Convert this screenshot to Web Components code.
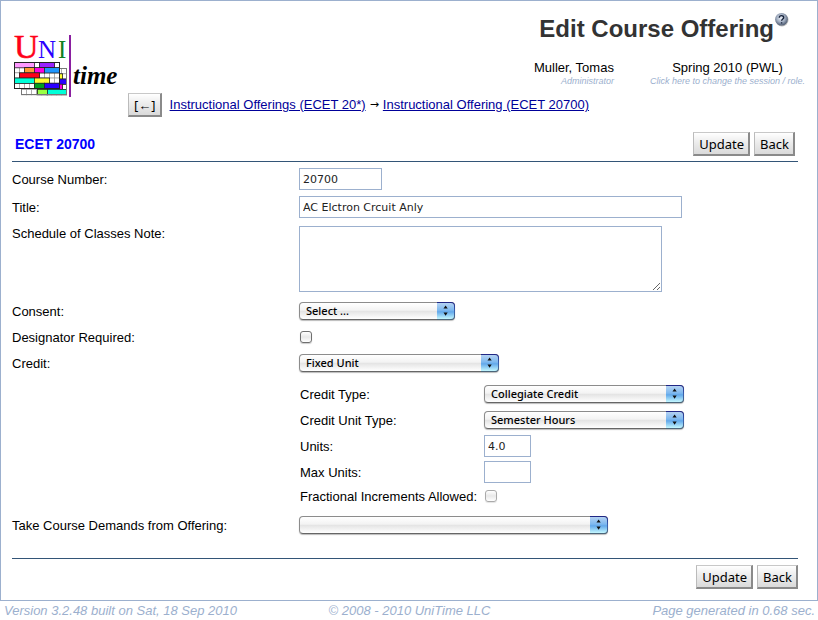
<!DOCTYPE html>
<html lang="en">
<head>
<meta charset="utf-8">
<title>Edit Course Offering</title>
<style>
  body {
    margin: 0;
    background: #fff;
    color: #000;
    font: 13px/16px "Liberation Sans", Arial, sans-serif;
    --line: #9cb0ce;
    --rule: #335577;
  }
</style>
</head>
<body>
<edit-page></edit-page>

<script>
const sheet = `*, *::before, *::after { box-sizing: border-box; }`;

class Base extends HTMLElement {
  connectedCallback() {
    if (this.shadowRoot) return;
    this.attachShadow({ mode: "open" }).innerHTML = `<style>${sheet}${this.css()}</style>${this.html()}`;
  }
  css() { return ""; }
  html() { return "<slot></slot>"; }
  attr(name) { return this.getAttribute(name) || ""; }
}

/* Timetable mark with the product name */
customElements.define("unitime-logo", class extends Base {
  css() {
    return `:host { display: block; width: 106px; } svg { display: block; width: 100%; overflow: visible; }`;
  }
  html() {
    const box = (x, y, w, fill, edge) => `<rect x="${x}" y="${y}" width="${w + 1}" height="6.2" fill="${edge}"/>
      <rect x="${x + 0.8}" y="${y + 0.8}" width="${w - 0.6}" height="4.6" fill="${fill}"/>`;
    const cell = (x, y, w, c) => box(x, y, w, c, "#222");
    const blank = (x, y, n) => Array.from({ length: n }, (_, i) => box(x + i * 5, y, 5, "#fff", "#999")).join("");
    const r = [28, 33.2, 38.4, 43.6, 48.8];
    const b = r.map(y => y + 6.2);
    const back = b.map(y => blank(7, y, 9)).join("")
      + cell(38, b[1], 10, "#ffff33") + cell(38, b[2], 14, "#2a00ff") + cell(38, b[3], 10, "#ff00e0")
      + cell(23, b[4], 10, "#99ff44") + cell(33, b[4], 19, "#00ffd8");
    const front = r.map(y => blank(0, y, 9)).join("")
      + cell(0, r[0], 20, "#ff99ff") + cell(25, r[0], 15, "#9922ff")
      + cell(10, r[1], 10, "#ff9933") + cell(20, r[1], 10, "#ff00e0") + cell(30, r[1], 15, "#1e96ff")
      + cell(5, r[2], 20, "#ff0018")
      + cell(0, r[3], 20, "#00ffd8") + cell(20, r[3], 15, "#ffff33")
      + cell(20, r[4], 10, "#00a020") + cell(30, r[4], 15, "#2a00ff");
    return `<svg viewBox="0 0 106 64" role="img" aria-label="UniTime">
      ${back}<rect x="7.5" y="34.5" width="45" height="26" fill="none" stroke="#777"/>
      ${front}<rect x="0.5" y="28.5" width="45" height="26" fill="none" stroke="#222"/>
      <rect x="55" y="1" width="2" height="62" fill="#8a1fa0"/>
      <g font-family="Liberation Serif, Times New Roman, serif">
        <text x="0" y="24" font-size="34" fill="#ff0018" stroke="#ff0018" stroke-width=".5">U</text>
        <text x="24" y="24" font-size="25" fill="#2a00ff">N</text>
        <text x="44" y="24" font-size="25" fill="#108020">I</text>
        <text x="59" y="50" font-size="25" font-style="italic" font-weight="bold">time</text>
      </g></svg>`;
  }
});

customElements.define("help-link", class extends Base {
  css() { return `:host { display: block; } a, svg { display: block; }`; }
  html() {
    return `<a href="#help" aria-label="Help"><svg width="15" height="15" viewBox="0 0 15 15">
      <defs><radialGradient id="g" cx=".45" cy=".4" r=".65"><stop offset="0" stop-color="#eef2f8"/>
      <stop offset=".5" stop-color="#a3afc2"/><stop offset="1" stop-color="#3c4a61"/></radialGradient></defs>
      <circle cx="8" cy="8" r="6.5" fill="#bbb"/><circle cx="7.5" cy="7.3" r="6.3" fill="url(#g)"/>
      <path d="M5.3 5.7C5.4 3 9.8 3 9.7 5.6C9.6 7 7.6 7 7.6 8.8M7.6 10.2V11.6" fill="none" stroke="#17233b" stroke-width="1.4"/>
    </svg></a>`;
  }
});

customElements.define("push-button", class extends Base {
  css() {
    return `:host { display: block; }
      button { display: block; height: 24px; margin: 0; padding: 0 4px 0 5px; color: #000;
        font: 13px/20px "Noto Sans", "Open Sans", sans-serif;
        border: 1px solid; border-width: 1px 2px 2px 1px; border-color: #c8c8c8 #8a8a8a #8a8a8a #bbb;
        background: linear-gradient(#fff, #ececec 45%, #dadada); }`;
  }
  html() { return `<button type="button"><slot></slot></button>`; }
});

/* Two stacked lines: a main one and a small italic note */
customElements.define("user-info", class extends Base {
  css() {
    return `:host { display: block; text-align: var(--align, center); }
      a { color: inherit; text-decoration: none; display: block; }
      small { display: block; font-size: 9px; line-height: 11px; font-style: italic; color: var(--line); }`;
  }
  html() { return `<a href="#${this.attr("target")}">${this.attr("name")}<small><slot></slot></small></a>`; }
});

customElements.define("bread-crumbs", class extends Base {
  css() {
    return `:host { display: block; }
      nav { display: flex; align-items: center; white-space: pre; }
      push-button { margin-right: 8px; }
      a { color: #000099; }
      span { font: 11px/16px "DejaVu Sans", sans-serif; margin: 0 4px; }`;
  }
  html() {
    return `<nav aria-label="Breadcrumb"><push-button>[←]</push-button
      ><a href="#offerings">Instructional Offerings (ECET 20*)</a><span>→</span
      ><a href="#offering">Instructional Offering (ECET 20700)</a></nav>`;
  }
});

customElements.define("page-header", class extends Base {
  css() {
    return `:host { display: flex; align-items: flex-start; gap: 8px; padding: 11px 10px 0 13px; }
      unitime-logo { margin-top: 22px; flex: none; }
      .main { flex: 1; min-width: 0; }
      .title { display: flex; justify-content: flex-end; padding-right: 18px; }
      h1 { margin: 0; font-size: 24px; line-height: 34px; color: #333; }
      .users { display: flex; justify-content: flex-end; gap: 36px; padding: 14px 2px 0 0; }
      user-info:first-child { --align: right; }
      bread-crumbs { padding-top: 6px; }`;
  }
  html() {
    return `<unitime-logo></unitime-logo>
      <div class="main">
        <div class="title"><h1><slot></slot></h1><help-link></help-link></div>
        <div class="users"><user-info target="user" name="Muller, Tomas">Administrator</user-info
          ><user-info target="session" name="Spring 2010 (PWL)">Click here to change the session / role.</user-info></div>
        <bread-crumbs></bread-crumbs>
      </div>`;
  }
});

customElements.define("button-bar", class extends Base {
  css() { return `:host { display: flex; justify-content: flex-end; gap: 4px; }`; }
  html() { return `<push-button>Update</push-button><push-button>Back</push-button>`; }
});

/* A label and its control on one row */
class FormField extends Base {
  css() {
    return `:host { display: grid; grid-template-columns: var(--label-width, 287px) minmax(0, 1fr);
        align-items: center; min-height: var(--row, 28px); }
      label { white-space: nowrap; padding-top: 1px; }
      input, textarea, select { margin: 0; max-width: 100%; }
      ${this.controlCss()}`;
  }
  html() { return `<label for="c">${this.attr("label")}</label>${this.control()}`; }
}

const boxed = `border: 1px solid var(--line); border-radius: 0; background: #fff; color: #222;
  font: 11px/14px "DejaVu Sans", Verdana, sans-serif; padding: 3px; outline: 0;`;

customElements.define("text-field", class extends FormField {
  controlCss() { return `input { ${boxed} height: 22px; }`; }
  control() { return `<input id="c" type="text" value="${this.attr("value")}" style="width:${this.attr("width")}px">`; }
});

customElements.define("note-field", class extends FormField {
  controlCss() {
    return `:host { align-items: start; padding: 5px 0; }
      label { padding-top: 0; }
      textarea { ${boxed} display: block; width: 363px; height: 66px; resize: both; }`;
  }
  control() { return `<textarea id="c"></textarea>`; }
});

customElements.define("check-field", class extends FormField {
  controlCss() {
    return `:host { min-height: var(--check-row, 24px); }
      input { appearance: none; width: 12px; height: 12px; margin: 0 0 0 1px; border: 1px solid #6f6f6f;
        border-radius: 3px; background: linear-gradient(#fff, #e8e8e8 50%, #fff); box-shadow: 0 1px 1px #ccc; }
      input:disabled { border-color: #aaa; box-shadow: 0 1px 1px #e4e4e4; }
      input:checked { background: #6eb0ee; }`;
  }
  control() { return `<input id="c" type="checkbox" ${this.hasAttribute("disabled") ? "disabled" : ""}>`; }
});

customElements.define("select-field", class extends FormField {
  controlCss() {
    return `.wrap { position: relative; display: block; max-width: 100%; }
      select { appearance: none; display: block; width: 100%; height: 18px; padding: 0 22px 0 6px; color: #000;
        font: 11px/16px "Noto Sans", "Open Sans", sans-serif; font-weight: 500;
        border: 1px solid #8c8c8c; border-bottom-color: #666; border-radius: 4px;
        background: linear-gradient(#fff, #f3f3f3 45%, #e4e4e4 52%, #fff); box-shadow: 0 1px 1px #bbb; }
      svg { position: absolute; top: 0; right: 0; pointer-events: none; }`;
  }
  control() {
    return `<span class="wrap" style="width:${this.attr("width")}px"><select id="c"><option>${this.attr("value")}</option></select>
      <svg width="18" height="18" viewBox="0 0 18 18" aria-hidden="true">
        <defs><linearGradient id="f" x2="0" y2="1"><stop offset="0" stop-color="#b4d2f2"/><stop offset=".45" stop-color="#7db8ef"/>
          <stop offset=".55" stop-color="#62a8ea"/><stop offset="1" stop-color="#c4f8ff"/></linearGradient>
        <linearGradient id="s" x2="0" y2="1"><stop offset="0" stop-color="#1f2382"/><stop offset=".5" stop-color="#3a62b0"/>
          <stop offset="1" stop-color="#4c6577"/></linearGradient></defs>
        <path d="M0 0H14Q18 0 18 4V14Q18 18 14 18H0Z" fill="url(#s)"/>
        <path d="M0 1H14Q17 1 17 4V14Q17 17 14 17H0Z" fill="url(#f)"/>
        <path d="M6.5 6.6L8.6 3.4L10.7 6.6ZM6.5 10.6L8.6 13.8L10.7 10.6Z" fill="#111"/>
      </svg></span>`;
  }
});

customElements.define("credit-panel", class extends Base {
  css() {
    return `:host { display: block; padding: 4px 0 4px 288px; --label-width: 184px; --row: 26px; --check-row: 22px; }`;
  }
  html() {
    return `<select-field label="Credit Type:" value="Collegiate Credit" width="200"></select-field>
      <select-field label="Credit Unit Type:" value="Semester Hours" width="200"></select-field>
      <text-field label="Units:" value="4.0" width="47"></text-field>
      <text-field label="Max Units:" value="" width="47"></text-field>
      <check-field label="Fractional Increments Allowed:" disabled></check-field>`;
  }
});

customElements.define("course-form", class extends Base {
  css() {
    return `:host { display: block; padding: 15px 19px 11px 11px; }
      .head { display: flex; justify-content: space-between; align-items: center;
        padding: 0 3px 5px; border-bottom: 1px solid var(--rule); }
      h2 { margin: 0; font-size: 14px; line-height: 18px; color: #0000ff; }
      .fields { padding: 3px 0 19px; }
      .foot { border-top: 1px solid var(--rule); padding-top: 6px; }`;
  }
  html() {
    return `<form>
      <div class="head"><h2>ECET 20700</h2><button-bar></button-bar></div>
      <div class="fields">
        <text-field label="Course Number:" value="20700" width="83"></text-field>
        <text-field label="Title:" value="AC Elctron Crcuit Anly" width="383"></text-field>
        <note-field label="Schedule of Classes Note:"></note-field>
        <select-field label="Consent:" value="Select ..." width="156"></select-field>
        <check-field label="Designator Required:"></check-field>
        <select-field label="Credit:" value="Fixed Unit" width="200"></select-field>
        <credit-panel></credit-panel>
        <select-field label="Take Course Demands from Offering:" value="" width="309"></select-field>
      </div>
      <div class="foot"><button-bar></button-bar></div>
    </form>`;
  }
});

customElements.define("page-footer", class extends Base {
  css() {
    return `:host { display: grid; grid-template-columns: 1fr auto 1fr; padding: 2px 3px 1px 4px;
        color: var(--line); font-style: italic; white-space: nowrap; }
      span:last-child { text-align: right; }`;
  }
  html() {
    return `<span>Version 3.2.48 built on Sat, 18 Sep 2010</span><span>© 2008 - 2010 UniTime LLC</span
      ><span>Page generated in 0.68 sec.</span>`;
  }
});

customElements.define("edit-page", class extends Base {
  css() { return `:host { display: block; } main { border: 1px solid var(--line); }`; }
  html() {
    return `<main><page-header>Edit Course Offering</page-header><course-form></course-form></main><page-footer></page-footer>`;
  }
});
</script>
</body>
</html>
